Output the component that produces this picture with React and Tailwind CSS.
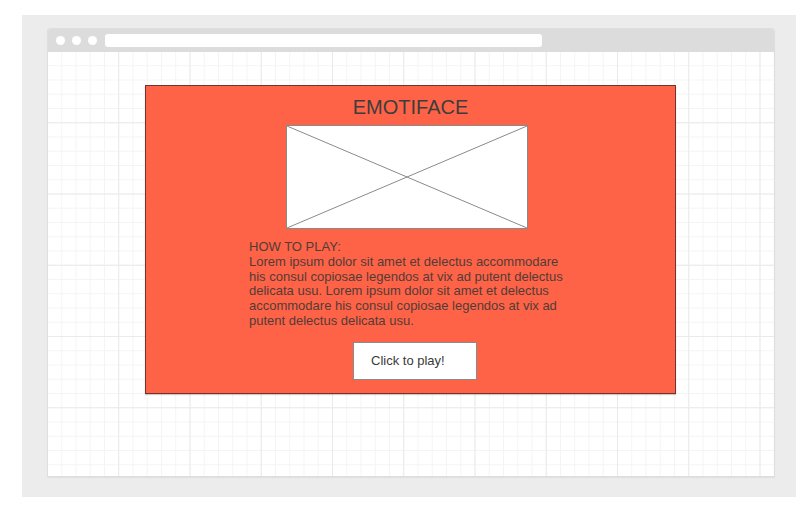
import React from 'react';

const bodyText =
    'Lorem ipsum dolor sit amet et delectus accommodare his consul copiosae legendos at vix ad putent delectus delicata usu. Lorem ipsum dolor sit amet et delectus accommodare his consul copiosae legendos at vix ad putent delectus delicata usu.';

function ImagePlaceholder() {
    return (
        <div className="ml-[140px] mt-[6px] w-[242px] h-[104px] bg-white border border-[#8a8a8a]">
            <svg width="100%" height="100%" viewBox="0 0 100 100" preserveAspectRatio="none">
                <line x1="0" y1="0" x2="100" y2="100" stroke="#8a8a8a" strokeWidth="1" vectorEffect="non-scaling-stroke" />
                <line x1="100" y1="0" x2="0" y2="100" stroke="#8a8a8a" strokeWidth="1" vectorEffect="non-scaling-stroke" />
            </svg>
        </div>
    );
}

export default function App() {
    return (
        <div className="w-[811px] h-[512px] bg-white pt-[15px] pl-[22px] font-['Liberation_Sans',Arial,sans-serif]">
            <div className="w-[774px] h-[482px] bg-[#ececec] pt-[13px] pl-[25px]">
                <div className="w-[728px] h-[449px] flex flex-col border border-[#dedede] rounded-t-[3px] shadow-[0_1px_1px_rgba(0,0,0,0.06)]">
                    {/* title bar */}
                    <div className="h-[23px] bg-[#dcdcdc] flex items-center pl-[8px] rounded-t-[3px]">
                        <div className="flex gap-[7px]">
                            <div className="w-[9px] h-[9px] rounded-full bg-white" />
                            <div className="w-[9px] h-[9px] rounded-full bg-white" />
                            <div className="w-[9px] h-[9px] rounded-full bg-white" />
                        </div>
                        <div className="ml-[8px] w-[437px] h-[13px] rounded-[3px] bg-white" />
                    </div>

                    {/* canvas */}
                    <div className="flex-1 bg-white bg-[linear-gradient(to_right,#eaeaea_1px,transparent_1px),linear-gradient(to_bottom,#eaeaea_1px,transparent_1px),linear-gradient(to_right,#f4f4f4_1px,transparent_1px),linear-gradient(to_bottom,#f4f4f4_1px,transparent_1px)] bg-[size:71.25px_71.25px,71.25px_71.25px,14.25px_14.25px,14.25px_14.25px] bg-[position:-1px_-1px] pt-[33px] pl-[97px]">
                        <div className="w-[531px] h-[309px] bg-[#fe6347] border border-[#74332a] shadow-[0_1px_1px_rgba(0,0,0,0.2)]">
                            <h1 className="pt-[10px] text-center text-[20px] leading-[23px] text-[#3d3d3d]">EMOTIFACE</h1>
                            <ImagePlaceholder />
                            <div className="ml-[103px] mt-[11px] w-[322px] text-[13px] leading-[14.8px] text-[#523c37]">
                                <div>HOW TO PLAY:</div>
                                <div>{bodyText}</div>
                            </div>
                            <button className="ml-[207px] mt-[13px] w-[124px] h-[38px] bg-white border border-[#8a8a8a] flex items-center pl-[17px] text-[13px] text-[#3a3a3a]">
                                Click to play!
                            </button>
                        </div>
                    </div>
                </div>
            </div>
        </div>
    );
}
